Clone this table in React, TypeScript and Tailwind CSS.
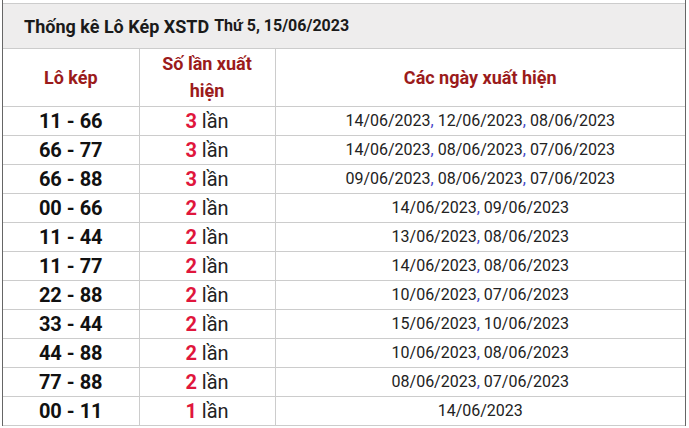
// Lô kép statistics table — title bar plus a three-column table.

type Row = { pair: string; count: number; dates: string[] };

const rows: Row[] = [
  { pair: "11 - 66", count: 3, dates: ["14/06/2023", "12/06/2023", "08/06/2023"] },
  { pair: "66 - 77", count: 3, dates: ["14/06/2023", "08/06/2023", "07/06/2023"] },
  { pair: "66 - 88", count: 3, dates: ["09/06/2023", "08/06/2023", "07/06/2023"] },
  { pair: "00 - 66", count: 2, dates: ["14/06/2023", "09/06/2023"] },
  { pair: "11 - 44", count: 2, dates: ["13/06/2023", "08/06/2023"] },
  { pair: "11 - 77", count: 2, dates: ["14/06/2023", "08/06/2023"] },
  { pair: "22 - 88", count: 2, dates: ["10/06/2023", "07/06/2023"] },
  { pair: "33 - 44", count: 2, dates: ["15/06/2023", "10/06/2023"] },
  { pair: "44 - 88", count: 2, dates: ["10/06/2023", "08/06/2023"] },
  { pair: "77 - 88", count: 2, dates: ["08/06/2023", "07/06/2023"] },
  { pair: "00 - 11", count: 1, dates: ["14/06/2023"] },
];

const cell = "border-r border-b border-[#cccccc] text-center align-middle p-0";

export default function App() {
  return (
    <div className="min-h-[428px] bg-white font-['Roboto','Liberation_Sans',sans-serif] text-[#222]">
      <div className="ml-[2px] w-[684px] border-x border-[#666] pt-[3px]">
        <div className="flex h-[46px] items-center border-y border-[#cccccc] bg-[#eeeded] pl-[21px] text-[#1a1a1a]">
          <span className="text-[18px] font-bold">Thống kê Lô Kép XSTD</span>
          <span className="ml-[5px] text-[16px] font-bold">Thứ 5, 15/06/2023</span>
        </div>
        <table className="w-full table-fixed border-collapse">
          <colgroup>
            <col className="w-[136px]" />
            <col className="w-[136px]" />
            <col />
          </colgroup>
          <thead>
            <tr className="h-[57px] text-[18px] font-bold leading-[27px] text-[#9b1b1b]">
              <th className={cell}>Lô kép</th>
              <th className={`${cell} px-2`}>Số lần xuất hiện</th>
              <th className={`${cell} border-r-0`}>Các ngày xuất hiện</th>
            </tr>
          </thead>
          <tbody>
            {rows.map((r) => (
              <tr key={r.pair} className="h-[29px] leading-[24px]">
                <td className={`${cell} text-[20px] font-bold text-[#111]`}>{r.pair}</td>
                <td className={`${cell} text-[20px]`}>
                  <span className="font-bold text-[#e0163c]">{r.count}</span> lần
                </td>
                <td className={`${cell} border-r-0 text-[16px]`}>
                  {r.dates.map((d, i) => (
                    <span key={d}>
                      {i > 0 && <span className="text-[#4646c8]">, </span>}
                      {d}
                    </span>
                  ))}
                </td>
              </tr>
            ))}
          </tbody>
        </table>
      </div>
    </div>
  );
}
